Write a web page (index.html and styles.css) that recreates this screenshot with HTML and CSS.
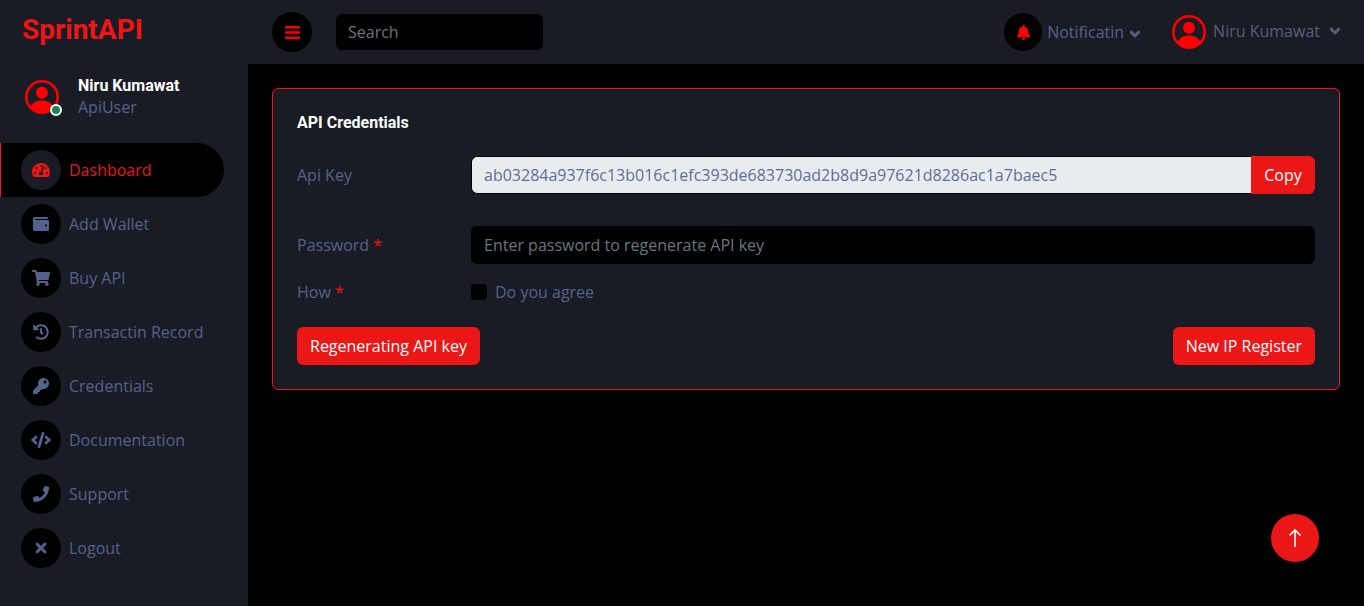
FILE: index.html
```html
<!DOCTYPE html>
<html lang="en">
<head>
<meta charset="utf-8">
<title>SprintAPI</title>
<link rel="stylesheet" href="styles.css">
</head>
<body>
<svg class="sprite" xmlns="http://www.w3.org/2000/svg">
  <symbol id="i-bars" viewBox="0 0 448 512"><path d="M16 132h416c8.837 0 16-7.163 16-16V76c0-8.837-7.163-16-16-16H16C7.163 60 0 67.163 0 76v40c0 8.837 7.163 16 16 16zm0 160h416c8.837 0 16-7.163 16-16v-40c0-8.837-7.163-16-16-16H16c-8.837 0-16 7.163-16 16v40c0 8.837 7.163 16 16 16zm0 160h416c8.837 0 16-7.163 16-16v-40c0-8.837-7.163-16-16-16H16c-8.837 0-16 7.163-16 16v40c0 8.837 7.163 16 16 16z"/></symbol>
  <symbol id="i-bell" viewBox="0 0 448 512"><path d="M224 512c35.32 0 63.97-28.65 63.97-64H160.03c0 35.35 28.65 64 63.97 64zm215.39-149.71c-19.32-20.76-55.47-51.99-55.47-154.29 0-77.7-54.48-139.9-127.94-155.16V32c0-17.67-14.32-32-31.98-32s-31.98 14.33-31.98 32v20.84C118.56 68.1 64.08 130.3 64.08 208c0 102.3-36.15 133.53-55.47 154.29-6 6.45-8.66 14.16-8.61 21.71.11 16.4 12.98 32 32.1 32h383.8c19.12 0 32-15.6 32.1-32 .05-7.55-2.61-15.27-8.61-21.71z"/></symbol>
  <symbol id="i-chev" viewBox="0 0 448 512"><path d="M207.029 381.476L12.686 187.132c-9.373-9.373-9.373-24.569 0-33.941l22.667-22.667c9.357-9.357 24.522-9.375 33.901-.04L224 284.505l154.745-154.021c9.379-9.335 24.544-9.317 33.901.04l22.667 22.667c9.373 9.373 9.373 24.569 0 33.941L240.971 381.476c-9.373 9.372-24.569 9.372-33.942 0z"/></symbol>
  <symbol id="i-tach" viewBox="0 0 576 512"><path d="M288 32C128.94 32 0 160.94 0 320c0 52.8 14.25 102.26 39.06 144.8 5.61 9.62 16.3 15.2 27.44 15.2h443c11.14 0 21.83-5.58 27.44-15.2C561.75 422.26 576 372.8 576 320c0-159.06-128.94-288-288-288zm0 64c14.71 0 26.58 10.13 30.32 23.65-1.11 2.26-2.64 4.23-3.45 6.67l-9.22 27.67c-5.13 3.49-10.97 6.01-17.64 6.01-17.67 0-32-14.33-32-32S270.33 96 288 96zM96 384c-17.67 0-32-14.33-32-32s14.33-32 32-32 32 14.33 32 32-14.33 32-32 32zm48-160c-17.67 0-32-14.33-32-32s14.33-32 32-32 32 14.33 32 32-14.33 32-32 32zm246.77-72.41l-61.33 184C343.13 347.33 352 364.54 352 384c0 11.72-3.38 22.55-8.88 32H232.88c-5.5-9.45-8.88-20.28-8.88-32 0-33.94 26.5-61.43 59.9-63.59l61.34-184.01c4.17-12.56 17.73-19.45 30.36-15.17 12.57 4.19 19.35 17.77 15.17 30.36zm14.66 57.2l15.52-46.55c3.47-1.29 7.13-2.23 11.05-2.23 17.67 0 32 14.33 32 32s-14.33 32-32 32c-11.38-.01-20.89-6.28-26.57-15.22zM480 384c-17.67 0-32-14.33-32-32s14.33-32 32-32 32 14.33 32 32-14.33 32-32 32z"/></symbol>
  <symbol id="i-wallet" viewBox="0 0 512 512"><path d="M461.2 128H80c-8.84 0-16-7.16-16-16s7.16-16 16-16h384c8.84 0 16-7.16 16-16 0-26.51-21.49-48-48-48H64C28.65 32 0 60.65 0 96v320c0 35.35 28.65 64 64 64h397.2c28.02 0 50.8-21.53 50.8-48V176c0-26.47-22.78-48-50.8-48zM416 336c-17.67 0-32-14.33-32-32s14.33-32 32-32 32 14.33 32 32-14.33 32-32 32z"/></symbol>
  <symbol id="i-cart" viewBox="0 0 576 512"><path d="M528.12 301.319l47.273-208C578.806 78.301 567.391 64 551.99 64H159.208l-9.166-44.81C147.758 8.021 137.93 0 126.529 0H24C10.745 0 0 10.745 0 24v16c0 13.255 10.745 24 24 24h69.883l70.248 343.435C147.325 417.1 136 435.222 136 456c0 30.928 25.072 56 56 56s56-25.072 56-56c0-15.674-6.447-29.835-16.824-40h209.647C430.447 426.165 424 440.326 424 456c0 30.928 25.072 56 56 56s56-25.072 56-56c0-22.172-12.888-41.332-31.579-50.405l5.517-24.276c3.413-15.018-8.002-29.319-23.403-29.319H218.117l-6.545-32h293.145c11.206 0 20.92-7.754 23.403-18.681z"/></symbol>
  <symbol id="i-history" viewBox="0 0 512 512"><path d="M504 255.531c.253 136.64-111.18 248.372-247.82 248.468-59.015.042-113.223-20.53-155.822-54.911-11.077-8.94-11.905-25.541-1.839-35.607l11.267-11.267c8.609-8.609 22.353-9.551 31.891-1.984C173.062 425.135 212.781 440 256 440c101.705 0 184-82.311 184-184 0-101.705-82.311-184-184-184-48.814 0-93.149 18.969-126.068 49.932l50.754 50.754c10.08 10.08 2.941 27.314-11.313 27.314H24c-8.837 0-16-7.163-16-16V38.627c0-14.254 17.234-21.393 27.314-11.314l49.372 49.372C129.209 34.136 189.552 8 256 8c136.81 0 247.747 110.78 248 247.531zm-180.912 78.784l9.823-12.63c8.138-10.463 6.253-25.542-4.21-33.679L288 256.349V152c0-13.255-10.745-24-24-24h-16c-13.255 0-24 10.745-24 24v135.651l65.409 50.874c10.463 8.137 25.541 6.253 33.679-4.21z"/></symbol>
  <symbol id="i-key" viewBox="0 0 512 512"><path d="M512 176.001C512 273.203 433.202 352 336 352c-11.22 0-22.19-1.062-32.827-3.069l-24.012 27.014A23.999 23.999 0 0 1 261.223 384H224v40c0 13.255-10.745 24-24 24h-40v40c0 13.255-10.745 24-24 24H24c-13.255 0-24-10.745-24-24v-78.059c0-6.365 2.529-12.47 7.029-16.971l161.802-161.802C163.108 213.814 160 195.271 160 176 160 78.798 238.797.001 335.999 0 433.488-.001 512 78.511 512 176.001zM336 128c0 26.51 21.49 48 48 48s48-21.49 48-48-21.49-48-48-48-48 21.49-48 48z"/></symbol>
  <symbol id="i-code" viewBox="0 0 640 512"><path d="M278.9 511.5l-61-17.7c-6.4-1.8-10-8.5-8.2-14.9L346.2 8.7c1.8-6.4 8.5-10 14.9-8.2l61 17.7c6.4 1.8 10 8.5 8.2 14.9L293.8 503.3c-1.9 6.4-8.5 10.1-14.9 8.2zm-114-112.2l43.5-46.4c4.6-4.9 4.3-12.7-.8-17.2L117 256l90.6-79.7c5.1-4.5 5.5-12.3.8-17.2l-43.5-46.4c-4.5-4.8-12.1-5.1-17-.5L3.8 247.2c-5.1 4.7-5.1 12.8 0 17.5l144.1 135.1c4.9 4.6 12.5 4.4 17-.5zm327.2.6l144.1-135.1c5.1-4.7 5.1-12.8 0-17.5L492.1 112.1c-4.8-4.5-12.4-4.3-17 .5L431.6 159c-4.6 4.9-4.3 12.7.8 17.2L523 256l-90.6 79.7c-5.1 4.5-5.5 12.3-.8 17.2l43.5 46.4c4.5 4.9 12.1 5.1 17 .6z"/></symbol>
  <symbol id="i-phone" viewBox="0 0 512 512"><path d="M493.4 24.6l-104-24c-11.3-2.6-22.9 3.3-27.5 13.9l-48 112c-4.2 9.8-1.4 21.3 6.9 28l60.6 49.6c-36 76.7-98.9 140.5-177.2 177.2l-49.6-60.6c-6.8-8.3-18.2-11.1-28-6.9l-112 48C3.9 366.5-2 378.1.6 389.4l24 104C27.1 504.2 36.7 512 48 512c256.1 0 464-207.5 464-464 0-11.2-7.7-20.9-18.6-23.4z"/></symbol>
  <symbol id="i-times" viewBox="0 0 352 512"><path d="M242.72 256l100.07-100.07c12.28-12.28 12.28-32.19 0-44.48l-22.24-22.24c-12.28-12.28-32.19-12.28-44.48 0L176 189.28 75.93 89.21c-12.28-12.28-32.19-12.28-44.48 0L9.21 111.45c-12.28 12.28-12.28 32.19 0 44.48L109.28 256 9.21 356.07c-12.28 12.28-12.28 32.19 0 44.48l22.24 22.24c12.28 12.28 32.2 12.28 44.48 0L176 322.72l100.07 100.07c12.28 12.28 32.2 12.28 44.48 0l22.24-22.24c12.28-12.28 12.28-32.19 0-44.48L242.72 256z"/></symbol>
  <symbol id="i-user" viewBox="0 0 34 34"><circle cx="17" cy="17" r="15.7" fill="none" stroke="currentColor" stroke-width="2.6"/><circle cx="17" cy="12.8" r="6"/><path d="M5.8 27.5C7 23 11 20.6 17 20.6s10 2.4 11.2 6.9A15.6 15.6 0 0 1 17 33a15.6 15.6 0 0 1-11.2-5.5z"/></symbol>
</svg>

<div class="app">
  <aside class="sidebar">
    <div class="logo">SprintAPI</div>
    <div class="profile">
      <span class="profile-pic">
        <svg class="avatar"><use href="#i-user"/></svg>
        <span class="status"></span>
      </span>
      <div class="profile-text">
        <div class="profile-name">Niru Kumawat</div>
        <div class="profile-role">ApiUser</div>
      </div>
    </div>
    <nav class="nav">
      <a class="nav-item active"><span class="nav-icon"><svg class="ic ic-tach"><use href="#i-tach"/></svg></span>Dashboard</a>
      <a class="nav-item"><span class="nav-icon"><svg class="ic"><use href="#i-wallet"/></svg></span>Add Wallet</a>
      <a class="nav-item"><span class="nav-icon"><svg class="ic ic-cart"><use href="#i-cart"/></svg></span>Buy API</a>
      <a class="nav-item"><span class="nav-icon"><svg class="ic"><use href="#i-history"/></svg></span>Transactin Record</a>
      <a class="nav-item"><span class="nav-icon"><svg class="ic"><use href="#i-key"/></svg></span>Credentials</a>
      <a class="nav-item"><span class="nav-icon"><svg class="ic ic-code"><use href="#i-code"/></svg></span>Documentation</a>
      <a class="nav-item"><span class="nav-icon"><svg class="ic"><use href="#i-phone"/></svg></span>Support</a>
      <a class="nav-item"><span class="nav-icon"><svg class="ic"><use href="#i-times"/></svg></span>Logout</a>
    </nav>
  </aside>

  <div class="content">
    <header class="topbar">
      <button class="menu-btn"><svg class="ic-red"><use href="#i-bars"/></svg></button>
      <input class="search" type="text" placeholder="Search">
      <div class="top-right">
        <div class="notif">
          <span class="bell"><svg class="ic-bell"><use href="#i-bell"/></svg></span>
          <span>Notificatin</span>
          <svg class="chev"><use href="#i-chev"/></svg>
        </div>
        <div class="top-user">
          <svg class="avatar"><use href="#i-user"/></svg>
          <span class="top-user-name">Niru Kumawat</span>
          <svg class="chev chev-user"><use href="#i-chev"/></svg>
        </div>
      </div>
    </header>

    <main class="main">
      <section class="card">
        <h2 class="card-title">API Credentials</h2>
        <div class="row row-key">
          <label class="label">Api Key</label>
          <div class="input-group">
            <input class="key-input" type="text" readonly value="ab03284a937f6c13b016c1efc393de683730ad2b8d9a97621d8286ac1a7baec5">
            <button class="btn btn-copy">Copy</button>
          </div>
        </div>
        <div class="row row-pass">
          <label class="label">Password <span class="req">*</span></label>
          <input class="pass-input" type="password" placeholder="Enter password to regenerate API key">
        </div>
        <div class="row row-how">
          <label class="label">How <span class="req">*</span></label>
          <label class="agree"><span class="check"></span>Do you agree</label>
        </div>
        <div class="actions">
          <button class="btn">Regenerating API key</button>
          <button class="btn">New IP Register</button>
        </div>
      </section>
    </main>
  </div>
</div>

<button class="to-top">
  <svg class="arrow" viewBox="0 0 16 20"><path d="M8 19V2M2.500 7.500 8 2l5.500 5.500" fill="none" stroke="currentColor" stroke-width="1.600"/></svg>
</button>
</body>
</html>
```

FILE: styles.css
```css
* { box-sizing: border-box; }
html, body { margin: 0; height: 100%; }
body {
  background: #000;
  color: #55628e;
  font-family: "Open Sans", "Liberation Sans", sans-serif;
  font-size: 16px;
  line-height: 24px;
  overflow: hidden;
}
.sprite { display: none; }
.app { display: flex; height: 606px; }

.sidebar { width: 248px; flex: none; background: #191c24; }
.logo {
  font-family: Roboto, sans-serif;
  font-weight: 700;
  font-size: 28px;
  line-height: 32px;
  color: #eb1616;
  padding: 14px 0 0 22px;
  height: 64px;
}
.profile { display: flex; align-items: flex-start; padding: 10px 0 0 25px; height: 79px; }
.profile-pic { position: relative; width: 34px; height: 34px; margin-top: 6px; flex: none; }
.avatar { display: block; width: 34px; height: 34px; color: #f00; fill: #f00; flex: none; }
.status {
  position: absolute;
  left: 25px;
  top: 24px;
  width: 12px;
  height: 12px;
  border-radius: 50%;
  background: #198754;
  border: 2px solid #fff;
}
.profile-text { margin-left: 19px; }
.profile-name { font-family: Roboto, sans-serif; font-weight: 700; color: #fff; line-height: 24px; }
.profile-role { line-height: 18px; }

.nav { display: flex; flex-direction: column; }
.nav-item {
  display: flex;
  align-items: center;
  height: 54px;
  width: 224px;
  padding-left: 21px;
}
.nav-icon {
  width: 40px;
  height: 40px;
  border-radius: 50%;
  background: #000;
  display: flex;
  align-items: center;
  justify-content: center;
  margin-right: 8px;
  flex: none;
}
.ic { width: 16px; height: 16px; fill: #55628e; }
.ic-tach { width: 18px; fill: #eb1616; }
.ic-cart { width: 18px; }
.ic-code { width: 20px; }
.nav-item.active {
  background: #000;
  color: #eb1616;
  border-left: 1px solid #eb1616;
  border-radius: 0 27px 27px 0;
  padding-left: 20px;
}
.nav-item.active .nav-icon { background: #191c24; }

.content { flex: 1; min-width: 0; display: flex; flex-direction: column; }
.topbar {
  height: 64px;
  flex: none;
  background: #191c24;
  display: flex;
  align-items: center;
  padding: 0 24px;
}
.menu-btn {
  width: 40px;
  height: 40px;
  border: 0;
  border-radius: 50%;
  background: #000;
  padding: 0;
  display: flex;
  align-items: center;
  justify-content: center;
  margin-right: 24px;
}
.ic-red { width: 15px; height: 17px; fill: #f00; }
.search {
  width: 207px;
  height: 36px;
  border: 0;
  border-radius: 6px;
  background: #000;
  padding: 0 12px;
  color: #55628e;
  font: 16px "Open Sans", sans-serif;
  outline: 0;
}
.search::placeholder { color: #6c757d; opacity: 1; }
.top-right { margin-left: auto; display: flex; align-items: center; }
.notif { display: flex; align-items: center; margin-right: 32px; }
.bell {
  width: 38px;
  height: 38px;
  border-radius: 50%;
  background: #000;
  display: flex;
  align-items: center;
  justify-content: center;
  margin-right: 5px;
}
.ic-bell { width: 13px; height: 15px; fill: #f00; }
.chev { width: 10px; height: 12px; fill: #55628e; stroke: #55628e; stroke-width: 45px; margin-left: 6px; margin-top: 3px; }
.top-user { display: flex; align-items: center; }
.top-user-name { margin-left: 7px; color: #5a5f7e; margin-top: -3px; }
.chev-user { margin-left: 10px; margin-top: -2px; fill: #5a5f7e; stroke: #5a5f7e; }

.main { padding: 24px; flex: 1; }
.card {
  height: 302px;
  background: #191c24;
  border: 1px solid #eb1616;
  border-radius: 6px;
  padding: 24px;
  display: flex;
  flex-direction: column;
}
.card-title {
  margin: 0;
  font-family: Roboto, sans-serif;
  font-weight: 700;
  font-size: 16px;
  line-height: 19px;
  color: #fff;
}
.row { display: flex; align-items: center; }
.label { width: 174px; flex: none; }
.req { color: #eb1616; }
.row-key { margin-top: 24px; height: 38px; }
.row-pass { margin-top: 32px; height: 38px; }
.row-how { margin-top: 16px; height: 24px; }
.input-group { flex: 1; display: flex; }
.key-input {
  flex: 1;
  min-width: 0;
  height: 38px;
  border: 1px solid #000;
  border-right: 0;
  border-radius: 6px 0 0 6px;
  background: #e9ecef;
  color: #5f6d9a;
  font: 16px "Open Sans", sans-serif;
  padding: 0 12px;
  outline: 0;
}
.btn {
  height: 38px;
  border: 0;
  border-radius: 6px;
  background: #eb1616;
  color: #fff;
  font: 16px "Open Sans", sans-serif;
  padding: 0 13px;
}
.btn-copy { border-radius: 0 6px 6px 0; width: 64px; padding: 0; }
.pass-input {
  flex: 1;
  min-width: 0;
  height: 38px;
  border: 0;
  border-radius: 6px;
  background: #000;
  color: #55628e;
  font: 16px "Open Sans", sans-serif;
  padding: 0 13px;
  outline: 0;
}
.pass-input::placeholder { color: #6c757d; opacity: 1; }
.agree { display: flex; align-items: center; }
.check { width: 16px; height: 16px; border-radius: 4px; background: #000; margin-right: 8px; }
.actions { display: flex; justify-content: space-between; margin-top: 23px; }

.to-top {
  position: fixed;
  right: 45px;
  bottom: 44px;
  width: 48px;
  height: 48px;
  border: 0;
  border-radius: 50%;
  background: #eb1616;
  color: #fff;
  padding: 0;
  display: flex;
  align-items: center;
  justify-content: center;
}
.arrow { width: 16px; height: 20px; }
```
